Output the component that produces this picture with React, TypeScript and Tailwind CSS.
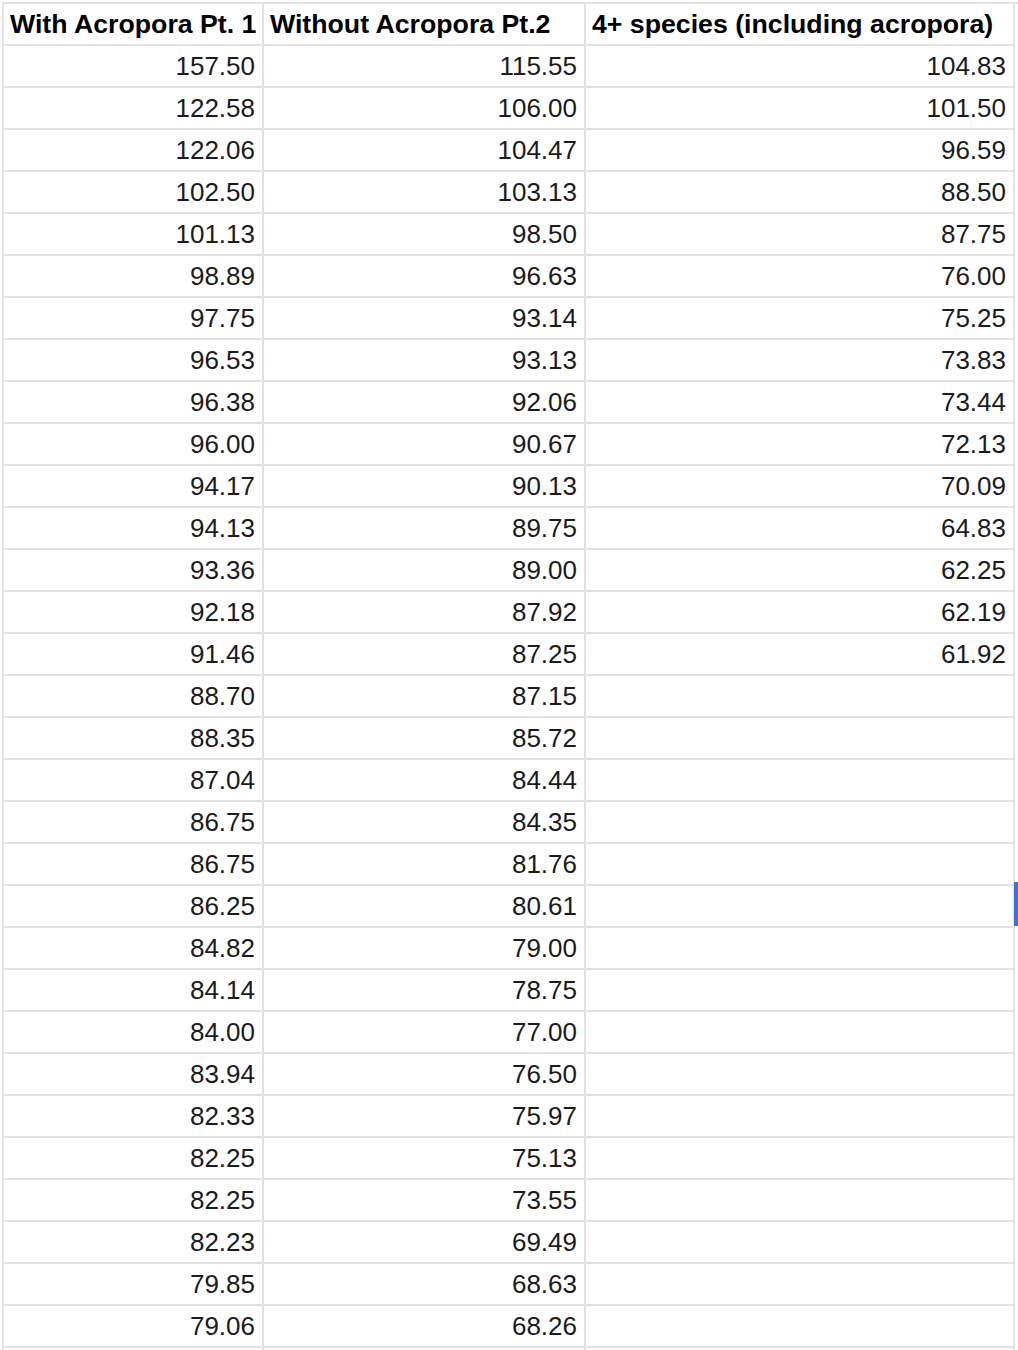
const colA = [
  '157.50', '122.58', '122.06', '102.50', '101.13', '98.89', '97.75', '96.53', '96.38', '96.00',
  '94.17', '94.13', '93.36', '92.18', '91.46', '88.70', '88.35', '87.04', '86.75', '86.75',
  '86.25', '84.82', '84.14', '84.00', '83.94', '82.33', '82.25', '82.25', '82.23', '79.85', '79.06',
];

const colB = [
  '115.55', '106.00', '104.47', '103.13', '98.50', '96.63', '93.14', '93.13', '92.06', '90.67',
  '90.13', '89.75', '89.00', '87.92', '87.25', '87.15', '85.72', '84.44', '84.35', '81.76',
  '80.61', '79.00', '78.75', '77.00', '76.50', '75.97', '75.13', '73.55', '69.49', '68.63', '68.26',
];

const colC = [
  '104.83', '101.50', '96.59', '88.50', '87.75', '76.00', '75.25', '73.83', '73.44', '72.13',
  '70.09', '64.83', '62.25', '62.19', '61.92',
];

const headers = ['With Acropora Pt. 1', 'Without Acropora Pt.2', '4+ species (including acropora)'];

// one extra empty row so the grid runs off the bottom like the sheet does
const rowCount = colA.length + 1;

export default function App() {
  return (
    <div
      className="relative h-[1350px] w-[1018px] overflow-hidden bg-white text-[26px] text-[#1b1b1b]"
      style={{ fontFamily: '"Liberation Sans", Arial, sans-serif' }}
    >
      <div className="ml-[2px] mt-[2px] grid grid-cols-[260px_322px_429px] border-l-2 border-t-2 border-[#e3e3e3]">
        {/* Header */}
        {headers.map((h) => (
          <div
            key={h}
            className="flex h-[42px] items-center overflow-hidden whitespace-nowrap border-b-2 border-r-2 border-[#e3e3e3] pl-[6px] text-[26.7px] font-bold text-black"
          >
            {h}
          </div>
        ))}

        {/* Rows */}
        {Array.from({ length: rowCount }).map((_, i) => (
          <div key={i} className="contents">
            {[colA[i], colB[i], colC[i]].map((v, j) => (
              <div
                key={j}
                className="flex h-[42px] items-center justify-end whitespace-nowrap border-b-2 border-r-2 border-[#e3e3e3] pr-[7px]"
              >
                {v ?? ''}
              </div>
            ))}
          </div>
        ))}
      </div>

      {/* Selection edge */}
      <div className="absolute right-0 top-[882px] h-[44px] w-[4px] bg-[#3b71db]" />
    </div>
  );
}
